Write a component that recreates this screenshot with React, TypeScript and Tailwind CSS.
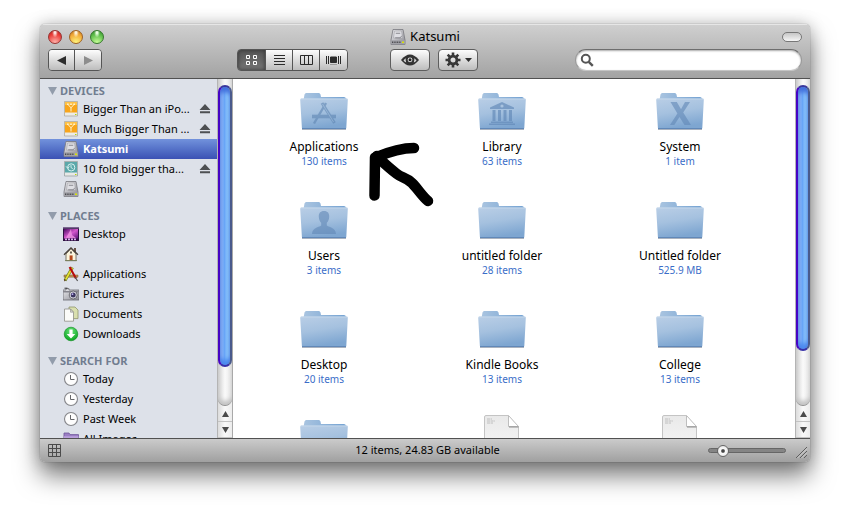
import { useState } from 'react'
import clsx from 'clsx'

type Badge = 'apps' | 'library' | 'system' | 'users'

const devices = [
  { name: 'Bigger Than an iPo...', icon: 'usb', eject: true },
  { name: 'Much Bigger Than ...', icon: 'usb', eject: true },
  { name: 'Katsumi', icon: 'disk', eject: false },
  { name: '10 fold bigger tha...', icon: 'time', eject: true },
  { name: 'Kumiko', icon: 'disk', eject: false },
]

const places = [
  { name: 'Desktop', icon: 'desktop' },
  { name: '', icon: 'home' },
  { name: 'Applications', icon: 'apps' },
  { name: 'Pictures', icon: 'camera' },
  { name: 'Documents', icon: 'docs' },
  { name: 'Downloads', icon: 'download' },
]

const searches = [
  { name: 'Today', icon: 'clock' },
  { name: 'Yesterday', icon: 'clock' },
  { name: 'Past Week', icon: 'clock' },
  { name: 'All Images', icon: 'smart' },
]

const files: { name: string; info: string; kind?: 'file'; badge?: Badge }[] = [
  { name: 'Applications', info: '130 items', badge: 'apps' },
  { name: 'Library', info: '63 items', badge: 'library' },
  { name: 'System', info: '1 item', badge: 'system' },
  { name: 'Users', info: '3 items', badge: 'users' },
  { name: 'untitled folder', info: '28 items' },
  { name: 'Untitled folder', info: '525.9 MB' },
  { name: 'Desktop', info: '20 items' },
  { name: 'Kindle Books', info: '13 items' },
  { name: 'College', info: '13 items' },
  { name: '', info: '' },
  { name: '', info: '', kind: 'file' },
  { name: '', info: '', kind: 'file' },
]

const buttonLook =
  'flex items-center justify-center bg-linear-to-b from-[#fdfdfd] to-[#bdbdbd] text-[#2b2b2b]'

function Gradients() {
  return (
    <svg className="absolute size-0" aria-hidden="true">
      <defs>
        <linearGradient id="folderFront" x1="0" y1="0" x2="0.25" y2="1">
          <stop offset="0" stopColor="#b9cee6" />
          <stop offset="0.5" stopColor="#a5c1df" />
          <stop offset="1" stopColor="#7ea6d1" />
        </linearGradient>
        <linearGradient id="folderBack" x1="0" y1="0" x2="1" y2="0">
          <stop offset="0" stopColor="#a9c4e0" />
          <stop offset="1" stopColor="#74a2d2" />
        </linearGradient>
        <linearGradient id="paper" x1="0" y1="0" x2="0" y2="1">
          <stop offset="0" stopColor="#e9e9e9" />
          <stop offset="1" stopColor="#fafafa" />
        </linearGradient>
        <linearGradient id="metal" x1="0" y1="0" x2="1" y2="1">
          <stop offset="0" stopColor="#ececef" />
          <stop offset="1" stopColor="#8b8b93" />
        </linearGradient>
        <linearGradient id="aurora" x1="0" y1="0" x2="1" y2="1">
          <stop offset="0" stopColor="#4b0a63" />
          <stop offset="0.5" stopColor="#d458cd" />
          <stop offset="1" stopColor="#5c1279" />
        </linearGradient>
        <radialGradient id="greenBall" cx="0.5" cy="0.3" r="0.7">
          <stop offset="0" stopColor="#6be37b" />
          <stop offset="1" stopColor="#08a51f" />
        </radialGradient>
      </defs>
    </svg>
  )
}

function SideIcon({ kind }: { kind: string }) {
  const drawing = () => {
    switch (kind) {
      case 'usb':
        return (
          <>
            <path d="M1.500.5h13V15h-13z" fill="#ecebe6" stroke="#a8a293" strokeWidth="0.7" />
            <path d="M2 1h12v10.600H2z" fill="#f8a51b" />
            <path d="M2 1h12v3H2z" fill="#fdc046" />
            <path d="M4.800 3.300l3.200 3.500 3.200-3.500M8 6.500v4" fill="none" stroke="#fff3cd" strokeWidth="1" />
            <path d="M4 2.400h1.600V4H4zM7.200 2.400h1.600V4H7.200zM10.400 2.400H12V4h-1.600z" fill="#fff3cd" />
            <path d="M12 13h1.500v1H12z" fill="#b7d800" />
          </>
        )
      case 'time':
        return (
          <>
            <path d="M1.500.5h13V15h-13z" fill="#e8e8e6" stroke="#8e9a99" strokeWidth="0.7" />
            <path d="M2 1h12v10.600H2z" fill="#5ba8aa" />
            <circle cx="8.2" cy="6.4" r="3.6" fill="none" stroke="#d9f2f0" strokeWidth="1" />
            <path d="M8 4v2.600l1.800 1M3 5.300l1.700 2 1.800-1.800" fill="none" stroke="#d9f2f0" strokeWidth="0.9" />
            <path d="M12 13h1.500v1H12z" fill="#b7d800" />
          </>
        )
      case 'disk':
        return (
          <>
            <path d="M3 .5h10L15 11v4.500H1V11z" fill="url(#metal)" stroke="#77777d" strokeWidth="0.8" />
            <path d="M1 11.200h14v4H1z" fill="#a0a0a6" />
            <path d="M4.500 2h7l1 7h-9z" fill="#dedee3" stroke="#a4a4aa" strokeWidth="0.6" />
            <path d="M5.800 4.300h4.400M5.200 8.800h5l1.600-2" fill="none" stroke="#77777f" strokeWidth="0.8" />
            <path d="M2 13.200h9" stroke="#4c4c50" strokeDasharray="1 0.7" strokeWidth="1.4" />
            <path d="M12 12.600h2v1.500h-2z" fill="#d9e400" />
          </>
        )
      case 'desktop':
        return (
          <>
            <path d="M0 1h16v14H0z" fill="#2d1140" />
            <path d="M1 3h14v9.500H1z" fill="url(#aurora)" />
            <path d="M3 12l5-9 1 6 4 3z" fill="#f39ae6" opacity="0.75" />
            <path d="M0 1h16v1.600H0z" fill="#7b6590" />
            <path d="M2 13.400h12" stroke="#d9a9ea" strokeWidth="1.6" strokeDasharray="2 1" />
          </>
        )
      case 'home':
        return (
          <>
            <path d="M11 2h2v4h-2z" fill="#6b5346" />
            <path d="M3 8l5-5.300L13 8v6.600H3z" fill="#fbf4dc" stroke="#61584a" strokeWidth="0.8" />
            <path d="M1 8.800L8 1.800l7 7" fill="none" stroke="#463f38" strokeWidth="1.3" />
            <path d="M6.600 9.400h3v5h-3z" fill="#b5481c" />
            <path d="M7 5.400h2v2H7z" fill="#6a6255" />
            <path d="M2 14.600h12" stroke="#79805b" />
          </>
        )
      case 'apps':
        return (
          <>
            <path d="M1 9h14v2.200H1z" fill="#bf9559" stroke="#7b592a" strokeWidth="0.5" />
            <path d="M9.400 1.500L2 14.600" stroke="#6a7c1d" strokeWidth="3" />
            <path d="M9.200 2L2.600 13.600" stroke="#e6df35" strokeWidth="1.8" />
            <path d="M6.600 1l6.400 11.400" stroke="#b90c0c" strokeWidth="2.1" />
            <path d="M12 11l2.600 4" stroke="#555" strokeWidth="1.2" />
            <path d="M1 15.400l.3-2.400 1.700 1z" fill="#5a3c18" />
          </>
        )
      case 'camera':
        return (
          <>
            <path d="M0 4h3V2.600h3V4h10v10H0z" fill="url(#metal)" stroke="#68686f" strokeWidth="0.8" />
            <path d="M0 5h16v1.500H0z" fill="#85858d" />
            <circle cx="10.2" cy="9" r="4" fill="#e2e2e8" stroke="#55555c" strokeWidth="0.8" />
            <circle cx="10.2" cy="9" r="2.5" fill="#3c3660" />
            <circle cx="9.5" cy="8.2" r="0.9" fill="#b9aef2" />
            <path d="M1.500 2.200h3" stroke="#333" />
          </>
        )
      case 'docs':
        return (
          <>
            <path d="M6 1h6l3 3v8.600H6z" fill="#d9dfae" stroke="#90966c" strokeWidth="0.8" />
            <path d="M1.500 3h6l3 3.200v9h-9z" fill="#fbfbf8" stroke="#8e8e88" strokeWidth="0.8" />
            <path d="M7.500 3v3.200h3z" fill="#d5d5cf" stroke="#8e8e88" strokeWidth="0.6" />
          </>
        )
      case 'download':
        return (
          <>
            <circle cx="8" cy="8" r="6.8" fill="url(#greenBall)" stroke="#068a1a" strokeWidth="0.6" />
            <path d="M6.400 3.600h3.200V8h2.700L8 12.600 3.700 8h2.700z" fill="#fff" />
          </>
        )
      case 'clock':
        return (
          <>
            <circle cx="8" cy="8" r="6.500" fill="#fdfdfd" stroke="#85868a" strokeWidth="1.1" />
            <path d="M7.500 4v4.500h4" fill="none" stroke="#66676b" strokeWidth="1" />
          </>
        )
      default:
        return (
          <>
            <path d="M1 2h5l1 1.600h8.500V15H.8z" fill="#9b7fc4" stroke="#6f559b" strokeWidth="0.8" />
            <path d="M1 5.200h14.400V15H1z" fill="#b9a0dc" />
            <path d="M5.500 7h5v4h-5z" fill="#8e70b9" />
          </>
        )
    }
  }
  return (
    <svg viewBox="0 0 16 16" className="size-4 shrink-0" aria-hidden="true">
      {drawing()}
    </svg>
  )
}

function SideSection({
  title,
  items,
  selected,
  onSelect,
}: {
  title: string
  items: { name: string; icon: string; eject?: boolean }[]
  selected: string
  onSelect: (name: string) => void
}) {
  return (
    <section className="mb-[9px]">
      <h2 className="flex h-4 items-center gap-[3px] pl-2 text-[11px] font-bold text-[#717d90]">
        <svg viewBox="0 0 9 8" className="h-2 w-[9px]" aria-hidden="true">
          <path d="M0 0h9L4.500 8z" fill="#929cab" />
        </svg>
        {title}
      </h2>
      <ul>
        {items.map((item) => (
          <li
            key={item.name}
            className={clsx(
              'flex h-5 items-center pr-1.5 pl-[23px]',
              item.name === selected &&
                'bg-linear-to-b from-[#7292dc] to-[#3b51b4] font-bold text-white',
            )}
          >
            <button
              type="button"
              aria-label={item.name || item.icon}
              onClick={() => onSelect(item.name)}
              className="flex min-w-0 flex-1 items-center gap-1 text-left whitespace-nowrap"
            >
              <SideIcon kind={item.icon} />
              {item.name}
            </button>
            {item.eject && (
              <button type="button" aria-label="Eject">
                <svg viewBox="0 0 12 10" className="h-2.5 w-3" aria-hidden="true">
                  <path d="M6 0l5.500 6H.5zM1 7.300h10v2H1z" fill="#4e5053" />
                </svg>
              </button>
            )}
          </li>
        ))}
      </ul>
    </section>
  )
}

function ScrollBar({ thumb }: { thumb: string }) {
  return (
    <div className="flex w-[15px] shrink-0 flex-col border-l border-[#b4b4b4] bg-linear-to-r from-[#dcdcdc] via-[#f9f9f9] to-[#ececec]">
      <div className="min-h-0 flex-1 rounded-b-full border-b border-[#8e8e8e] bg-linear-to-r from-[#d2d2d2] via-[#fafafa] to-[#e6e6e6] pt-1.5 shadow-[inset_0_-4px_4px_#c4c4c4]">
        <div
          className={clsx(
            'rounded-full border-2 border-t-[#39379b] border-r-[#4a5a8c] border-b-[#3731a8] border-l-[#4504c4]',
            'bg-linear-to-r from-[#b4cdf8] via-[#6aa6f7] via-45% to-[#b4ecff] shadow-[inset_0_5px_4px_#4370dc,inset_0_-5px_4px_#4d8bf0]',
            thumb,
          )}
        />
      </div>
      {['M3.500 0L7 6H0z', 'M0 0h7L3.500 6z'].map((d, i) => (
        <button
          key={d}
          type="button"
          aria-label={i === 0 ? 'Scroll up' : 'Scroll down'}
          className="flex h-4 items-center justify-center border-b border-[#c3c3c3]"
        >
          <svg viewBox="0 0 7 6" className="h-1.5 w-[7px]" aria-hidden="true">
            <path d={d} fill="#4a4a4a" />
          </svg>
        </button>
      ))}
    </div>
  )
}

function FolderBadge({ badge }: { badge: Badge }) {
  switch (badge) {
    case 'apps':
      return (
        <g stroke="#5f86b3" fill="none" opacity="0.6">
          <path d="M12 28.500h24" strokeWidth="3.600" />
          <path d="M26 15L14 35.500" strokeWidth="2.400" />
          <path d="M22 15l12.500 20" strokeWidth="3" />
          <path d="M22.500 16l11 18" stroke="#9ab7d7" strokeWidth="0.800" />
        </g>
      )
    case 'library':
      return (
        <g fill="#6188b7" opacity="0.65">
          <path d="M24 14l12 5.500v1.500H12v-1.500z" />
          <circle cx="24" cy="18" r="1.600" fill="#a9c3de" />
          <path d="M14.500 22h3v11h-3zM20 22h3v11h-3zM25.500 22h3v11h-3zM31 22h3v11h-3zM13 33.500h22V35H13zM11 35.500h26V37H11z" />
        </g>
      )
    case 'system':
      return (
        <path
          d="M14.500 14h6.300l4.200 7.300 4-7.300H34l-6.800 10.500L35 37h-6.500l-5-8-5.200 8H14l7.400-11.600z"
          fill="#6087b5"
          opacity="0.6"
        />
      )
    case 'users':
      return (
        <path
          d="M24 14c-3.700 0-5.400 2.400-5.200 5.800.1 2.700 1 4.700 2.400 6v2.600c-1 1.500-9 1.800-9.200 8.600h24c-.2-6.800-8.200-7.100-9.200-8.600v-2.600c1.400-1.300 2.300-3.300 2.400-6C29.400 16.400 27.700 14 24 14z"
          fill="#6087b5"
          opacity="0.6"
        />
      )
  }
}

function FolderIcon({ badge }: { badge?: Badge }) {
  return (
    <svg viewBox="0 0 48 48" className="size-12" aria-hidden="true">
      <path d="M2 41h44v1H2z" fill="#6f7f94" opacity="0.6" />
      <path d="M3.500 12l1-5.500Q4.800 5 6.300 5h12.500q1.400 0 1.700 1.500l.5 2.500h23q1.700 0 1.900 1.500V14h-42z" fill="url(#folderBack)" />
      <path d="M1.600 10.600H46.500q1.500 0 1.300 1.400L46.300 40q-.1 1-1.300 1H3.200q-1.200 0-1.300-1L.2 12q0-1.400 1.400-1.400z" fill="url(#folderFront)" />
      <path d="M1 11h46" stroke="#c9daec" strokeWidth="0.800" />
      <path d="M2 40.500h44" stroke="#6188b8" />
      {badge && <FolderBadge badge={badge} />}
    </svg>
  )
}

function PaperIcon() {
  return (
    <svg viewBox="0 0 48 48" className="size-12" aria-hidden="true">
      <path d="M6.500 2Q6.500.5 8 .5h22L40.500 12v35h-34z" fill="url(#paper)" stroke="#c4c4c4" />
      <path d="M30.500.5V11.500h10z" fill="#fff" stroke="#b0b0b0" strokeWidth="0.800" />
      <path d="M31 12h9.500" stroke="#8f8f8f" />
      <path d="M9 4h5M9 6h8M9 8h6" stroke="#b5b5b5" strokeWidth="0.800" strokeDasharray="3 0.600" />
    </svg>
  )
}

function DrawnArrow() {
  return (
    <svg
      viewBox="0 0 68 68"
      className="pointer-events-none absolute top-[63px] left-[136px] size-[68px]"
      fill="none"
      stroke="#000"
      strokeWidth="10.500"
      strokeLinecap="round"
      strokeLinejoin="round"
      aria-hidden="true"
    >
      <path d="M45 6C35 6 22 9 6 15.500L5.500 53.500" />
      <path d="M8 14C15 22 22 27 28 32c5 4 9 3 15 9s10 13 16 18" />
    </svg>
  )
}

const views = [
  {
    name: 'Icons',
    d: 'M1.500 1.500h3v3h-3zM8.500 1.500h3v3h-3zM1.500 7.500h3v3h-3zM8.500 7.500h3v3h-3z',
  },
  { name: 'List', d: 'M1 1.500h11M1 4.500h11M1 7.500h11M1 10.500h11' },
  { name: 'Columns', d: 'M.5 1.500h12v9H.5zM4.500 1.500v9M8.500 1.500v9' },
  { name: 'Cover Flow', d: '' },
]

export default function App() {
  const [selected, setSelected] = useState('Katsumi')
  const [view, setView] = useState('Icons')

  return (
    <div className="h-screen overflow-hidden bg-white px-10 pt-6 pb-[55px] font-['Lucida_Grande','Noto_Sans',sans-serif] text-[11px] text-black">
      <Gradients />
      <div className="flex h-full flex-col overflow-hidden rounded-[5px] shadow-[0_14px_24px_rgba(0,0,0,0.5),0_0_16px_rgba(0,0,0,0.22),0_0_1px_rgba(0,0,0,0.6)]">
        <header className="shrink-0 border-b border-[#515151] bg-linear-to-b from-[#d0d0d0] to-[#a3a3a3] px-2 pb-[7px] shadow-[inset_0_1px_0_#e6e6e6]">
          <div className="flex h-[25px] items-center">
            <div className="flex flex-1 gap-[7px]">
              <button type="button" aria-label="Close" className="size-3.5 rounded-full border border-[#963432] bg-[radial-gradient(ellipse_at_50%_12%,#ffe4e0_8%,transparent_34%),radial-gradient(circle_at_50%_95%,#ffb3ac,#ea3c37_65%,#ad2020)]" />
              <button type="button" aria-label="Minimize" className="size-3.5 rounded-full border border-[#9e6224] bg-[radial-gradient(ellipse_at_50%_12%,#fff3d8_8%,transparent_34%),radial-gradient(circle_at_50%_95%,#fff77e,#f1a735_65%,#b06a18)]" />
              <button type="button" aria-label="Zoom" className="size-3.5 rounded-full border border-[#37782e] bg-[radial-gradient(ellipse_at_50%_12%,#eaffe2_8%,transparent_34%),radial-gradient(circle_at_50%_95%,#c8ff9a,#5bbb48_65%,#2c7f28)]" />
            </div>
            <h1 className="flex items-center gap-1 text-[13px]">
              <SideIcon kind="disk" />
              Katsumi
            </h1>
            <div className="flex flex-1 justify-end">
              <button type="button" aria-label="Toggle toolbar" className="h-2.5 w-5 rounded-full border border-[#777] bg-linear-to-b from-[#c6c6c6] to-[#f6f6f6]" />
            </div>
          </div>

          <div className="flex items-center">
            <div className="flex divide-x divide-[#555] overflow-hidden rounded-[4px] border border-[#555]">
              <button type="button" aria-label="Back" className={clsx(buttonLook, 'h-5 w-[26px]')}>
                <svg viewBox="0 0 9 9" className="size-[9px]" aria-hidden="true">
                  <path d="M9 0v9L0 4.500z" fill="#2e2e2e" />
                </svg>
              </button>
              <button type="button" aria-label="Forward" className={clsx(buttonLook, 'h-5 w-[26px]')}>
                <svg viewBox="0 0 9 9" className="size-[9px]" aria-hidden="true">
                  <path d="M0 0v9l9-4.500z" fill="#8d8d8d" />
                </svg>
              </button>
            </div>

            <div className="ml-[135px] flex divide-x divide-[#555] overflow-hidden rounded-[4px] border border-[#555]">
              {views.map((v) => (
                <button
                  key={v.name}
                  type="button"
                  aria-label={v.name}
                  aria-pressed={view === v.name}
                  onClick={() => setView(v.name)}
                  className={clsx(
                    'flex h-5 w-[27px] items-center justify-center first:w-7',
                    view === v.name
                      ? 'bg-linear-to-b from-[#555] to-[#777] text-white shadow-[inset_0_0_4px_#333]'
                      : 'bg-linear-to-b from-[#fdfdfd] to-[#bdbdbd] text-[#2b2b2b]',
                  )}
                >
                  {v.d ? (
                    <svg viewBox="0 0 13 12" className="h-3 w-[13px]" fill="none" stroke="currentColor" aria-hidden="true">
                      <path d={v.d} />
                    </svg>
                  ) : (
                    <svg viewBox="0 0 15 12" className="h-3 w-[15px]" stroke="currentColor" aria-hidden="true">
                      <path d="M.5 2v8M2.500 2v8M12.500 2v8M14.500 2v8" />
                      <path d="M4.500 3h6v5.500h-6z" fill="currentColor" />
                      <path d="M4 10.500h7" stroke="#999" />
                    </svg>
                  )}
                </button>
              ))}
            </div>

            <button type="button" aria-label="Quick Look" className={clsx(buttonLook, 'ml-[42px] h-[22px] w-10 rounded-[4px] border border-[#5e5e5e]')}>
              <svg viewBox="0 0 18 12" className="h-3 w-[18px]" aria-hidden="true">
                <path d="M0 6Q9-5 18 6 9 17 0 6z" fill="#333" />
                <path d="M2.500 6.400Q3.400 5 4.800 4.300 4.300 6.500 5.200 8.600 3.600 7.800 2.500 6.400zM15.500 6.400q-.9-1.400-2.300-2.100.5 2.200-.4 4.300 1.600-.8 2.700-2.200z" fill="#d4d4d4" />
                <circle cx="9" cy="5.800" r="2.400" fill="#e4e4e4" />
                <circle cx="9" cy="5.800" r="1.500" fill="#222" />
              </svg>
            </button>
            <button type="button" aria-label="Action" className={clsx(buttonLook, 'ml-2 h-[22px] w-10 gap-1 rounded-[4px] border border-[#5e5e5e]')}>
              <svg viewBox="0 0 16 16" className="size-4" stroke="#383838" fill="none" aria-hidden="true">
                <circle cx="8" cy="8" r="3.900" strokeWidth="2.800" />
                <path
                  d="M8 .5v3M8 12.500v3M.5 8h3M12.500 8h3M2.700 2.700l2.100 2.100M11.200 11.200l2.100 2.100M2.700 13.300l2.100-2.100M11.200 4.800l2.100-2.100"
                  strokeWidth="2.600"
                />
              </svg>
              <svg viewBox="0 0 7 4" className="h-1 w-[7px]" aria-hidden="true">
                <path d="M0 0h7L3.500 4z" fill="#2e2e2e" />
              </svg>
            </button>

            <label className="ml-auto flex h-[22px] w-[227px] items-center rounded-full border border-[#999] border-t-[#6e6e6e] border-b-[#c4c4c4] bg-white px-1 shadow-[inset_0_1px_2px_#aaa]">
              <svg viewBox="0 0 14 14" className="size-3.5 shrink-0" fill="none" stroke="#555" aria-hidden="true">
                <circle cx="5.800" cy="5.800" r="4" strokeWidth="2" />
                <path d="M8.800 8.800l4 4" strokeWidth="2.400" />
              </svg>
              <input type="search" aria-label="Search" className="min-w-0 flex-1 bg-transparent px-1 outline-none" />
            </label>
          </div>
        </header>

        <div className="flex min-h-0 flex-1">
          <aside className="flex w-48 shrink-0 bg-[#dde1e9]">
            <nav className="min-w-0 flex-1 overflow-hidden pt-1">
              <SideSection title="DEVICES" items={devices} selected={selected} onSelect={setSelected} />
              <SideSection title="PLACES" items={places} selected={selected} onSelect={setSelected} />
              <SideSection title="SEARCH FOR" items={searches} selected={selected} onSelect={setSelected} />
            </nav>
            <ScrollBar thumb="h-[88%]" />
          </aside>

          <main className="relative min-w-0 flex-1 overflow-hidden border-l border-[#a9a9a9] bg-white">
            <ul className="grid grid-cols-[repeat(auto-fill,178px)] pt-[9px] pl-0.5">
              {files.map((file, i) => (
                <li key={i} className="flex h-[109px] flex-col items-center">
                  {file.kind === 'file' ? <PaperIcon /> : <FolderIcon badge={file.badge} />}
                  <span className="mt-[3px] text-[12px] leading-4">{file.name}</span>
                  <span className="text-[10px] leading-3 text-[#3a6dc8]">{file.info}</span>
                </li>
              ))}
            </ul>
            <DrawnArrow />
          </main>
          <ScrollBar thumb="h-[83%]" />
        </div>

        <footer className="flex h-6 shrink-0 items-center border-t border-[#515151] bg-linear-to-b from-[#cbcbcb] to-[#a0a0a0] pr-[3px] pl-2">
          <div className="flex-1">
            <button type="button" aria-label="Show path" className="block">
              <svg viewBox="0 0 13 13" className="size-[13px]" fill="none" stroke="#4b4b4b" aria-hidden="true">
                <path d="M.5.5h12v12H.5zM4.500.5v12M8.500.5v12M.5 4.500h12M.5 8.500h12" />
              </svg>
            </button>
          </div>
          <p>12 items, 24.83 GB available</p>
          <div className="flex flex-1 items-center justify-end gap-2.5">
            <input
              type="range"
              aria-label="Icon size"
              defaultValue={12}
              className="h-[5px] w-[78px] appearance-none rounded-full border border-[#666] bg-[#858585] [&::-webkit-slider-thumb]:size-3 [&::-webkit-slider-thumb]:appearance-none [&::-webkit-slider-thumb]:rounded-full [&::-webkit-slider-thumb]:border [&::-webkit-slider-thumb]:border-[#666] [&::-webkit-slider-thumb]:bg-[radial-gradient(circle,#444_18%,#fafafa_34%,#ddd)]"
            />
            <svg viewBox="0 0 11 11" className="mt-1 size-[11px]" stroke="#5e5e5e" aria-hidden="true">
              <path d="M0 11L11 0M4 11l7-7M8 11l3-3" />
              <path d="M1.500 11L11 1.500M5.500 11L11 5.500" stroke="#d8d8d8" strokeWidth="0.700" />
            </svg>
          </div>
        </footer>
      </div>
    </div>
  )
}
